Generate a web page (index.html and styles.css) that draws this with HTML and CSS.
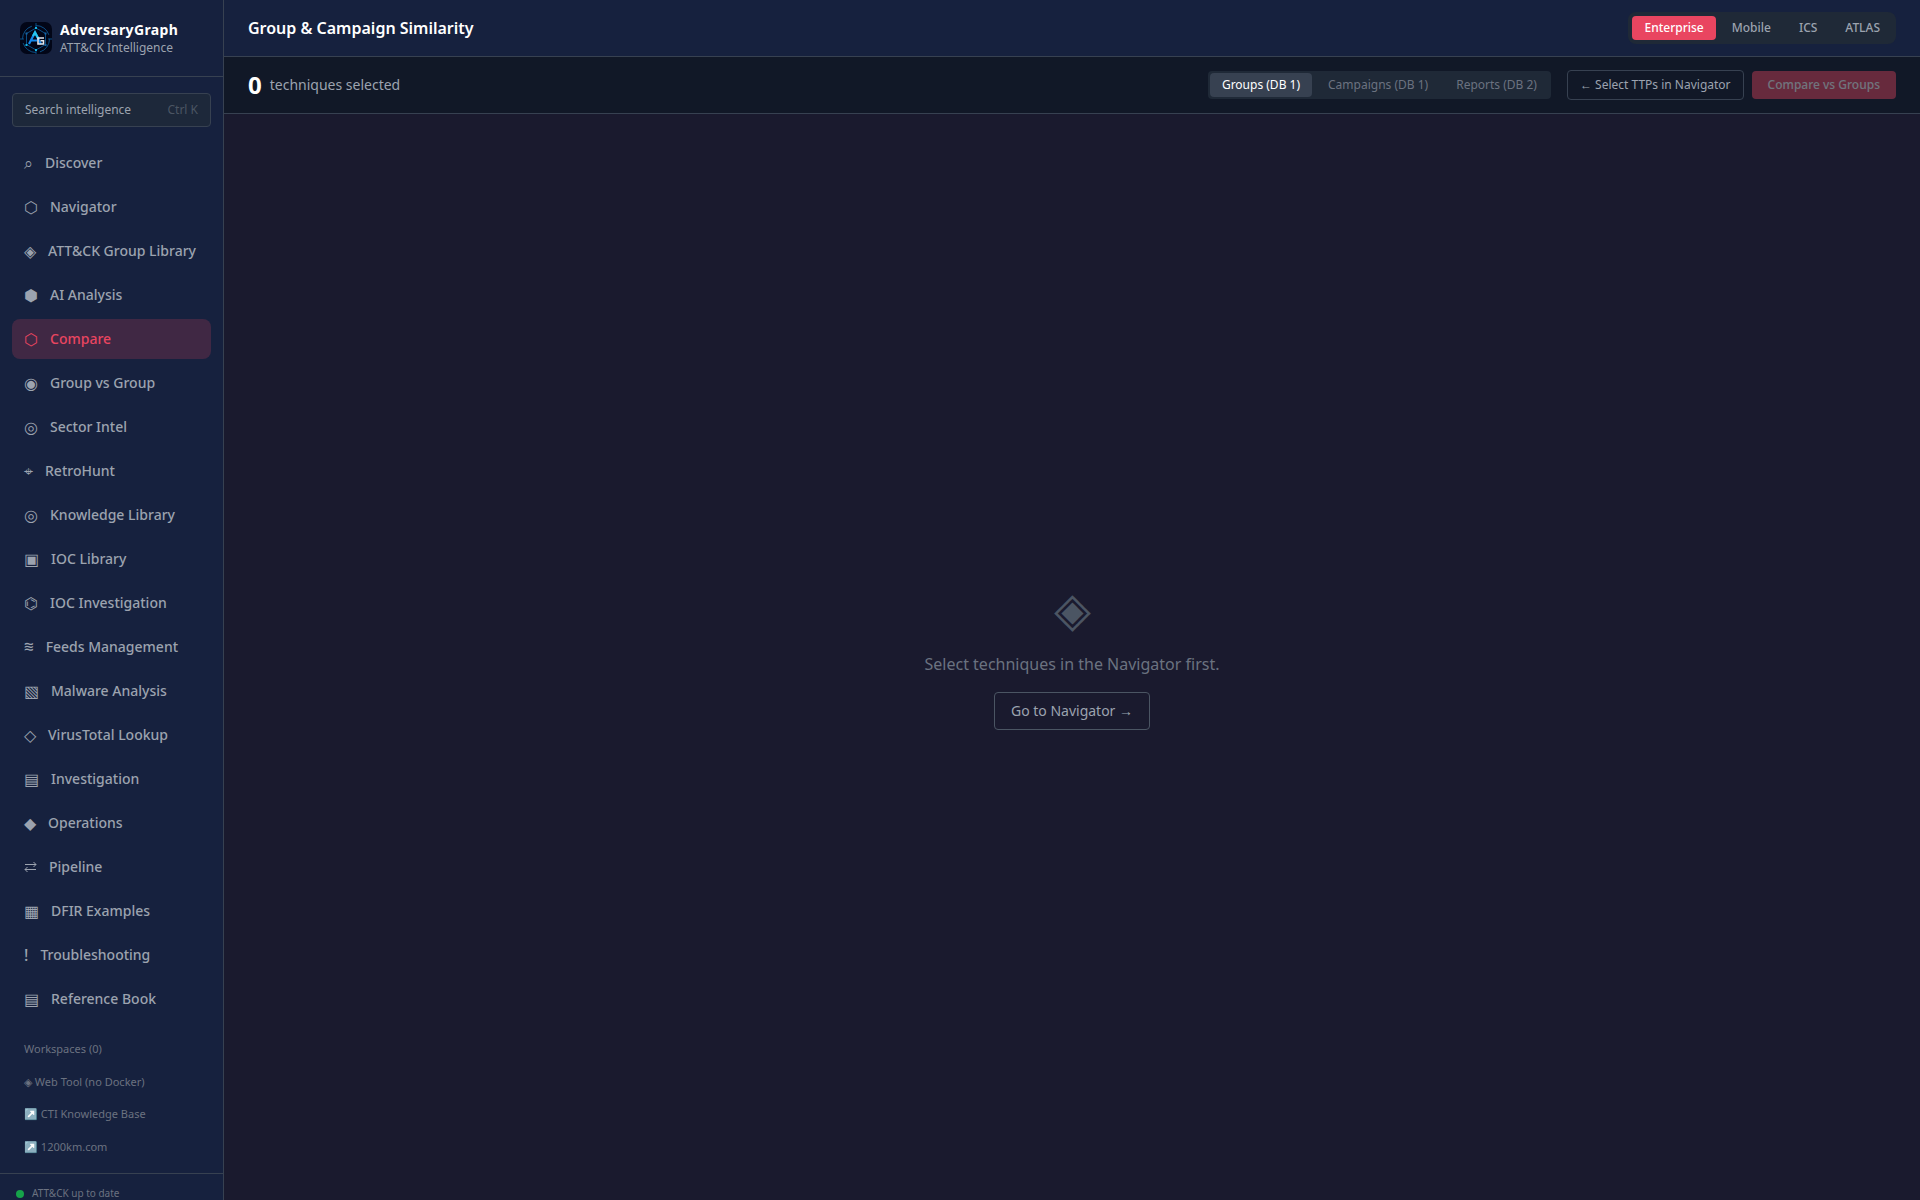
FILE: index.html
```
<!DOCTYPE html>
<html lang="en">
<head>
  <meta charset="UTF-8">
  <meta name="viewport" content="width=device-width, initial-scale=1.0">
  <title>AdversaryGraph</title>
  <link rel="stylesheet" href="styles.css">
</head>
<body>
  <div class="app">
    <aside class="sidebar">
      <div class="brand">
        <svg class="brand-logo" viewBox="0 0 32 32" aria-hidden="true">
          <rect width="32" height="32" rx="7" fill="#020617"/>
          <g fill="none" stroke="#0b4f86" stroke-width="1">
            <circle cx="16" cy="17" r="13.5" stroke-dasharray="17 4"/>
            <path d="M16 6l9.500 5.500v11L16 28l-9.500-5.500v-11z"/>
            <path d="M16 1v5M16 28v4M0 17h4M28 17h4"/>
          </g>
          <path d="M9 22l6-11.500L21 22M11 18.500h6" fill="none" stroke="#1286ea" stroke-width="2.200"/>
          <path d="M13 14l2-3.500 3 5.500" fill="none" stroke="#25c5ee" stroke-width="2.200"/>
          <path d="M24 16h-6v6h5.500v-3.200H20.500" fill="none" stroke="#e2e8f0" stroke-width="1.600"/>
          <g fill="#13b7e6">
            <rect x="15" y="5" width="2" height="2"/>
            <rect x="15" y="27" width="2" height="2"/>
            <rect x="5.500" y="22" width="2" height="2"/>
          </g>
          <g fill="#1766a6">
            <rect x="5.500" y="10.500" width="2" height="2"/>
            <rect x="24.500" y="10.500" width="2" height="2"/>
            <rect x="24.500" y="22" width="2" height="2"/>
          </g>
        </svg>
        <div>
          <div class="brand-name">AdversaryGraph</div>
          <div class="brand-sub">ATT&amp;CK Intelligence</div>
        </div>
      </div>

      <button class="search" type="button"><span>Search intelligence</span><kbd>Ctrl K</kbd></button>

      <nav class="nav">
        <a href="#"><span class="icon">⌕</span>Discover</a>
        <a href="#"><span class="icon">⬡</span>Navigator</a>
        <a href="#"><span class="icon">◈</span>ATT&amp;CK Group Library</a>
        <a href="#"><span class="icon">⬢</span>AI Analysis</a>
        <a href="#" class="active" aria-current="page"><span class="icon">⬡</span>Compare</a>
        <a href="#"><span class="icon">◉</span>Group vs Group</a>
        <a href="#"><span class="icon">◎</span>Sector Intel</a>
        <a href="#"><span class="icon">⌖</span>RetroHunt</a>
        <a href="#"><span class="icon">◎</span>Knowledge Library</a>
        <a href="#"><span class="icon">▣</span>IOC Library</a>
        <a href="#"><span class="icon">⌬</span>IOC Investigation</a>
        <a href="#"><span class="icon icon-mono">≋</span>Feeds Management</a>
        <a href="#"><span class="icon">▧</span>Malware Analysis</a>
        <a href="#"><span class="icon">◇</span>VirusTotal Lookup</a>
        <a href="#"><span class="icon">▤</span>Investigation</a>
        <a href="#"><span class="icon">◆</span>Operations</a>
        <a href="#"><svg class="icon-swap" viewBox="0 0 13 12" aria-hidden="true"><path d="M1 3.500h11M9.500 1L12 3.500 9.500 6M12 8.500H1M3.500 6L1 8.500 3.500 11"/></svg>Pipeline</a>
        <a href="#"><span class="icon">▦</span>DFIR Examples</a>
        <a href="#"><span class="icon">!</span>Troubleshooting</a>
        <a href="#"><span class="icon">▤</span>Reference Book</a>
      </nav>

      <div class="links">
        <button type="button">Workspaces (0)</button>
        <a href="#">◈ Web Tool (no Docker)</a>
        <a href="#">↗️ CTI Knowledge Base</a>
        <a href="#">↗️ 1200km.com</a>
      </div>

      <div class="status"><span class="dot"></span>ATT&amp;CK up to date</div>
    </aside>

    <div class="content">
      <header class="topbar">
        <h1>Group &amp; Campaign Similarity</h1>
        <div class="domains">
          <button type="button" class="active">Enterprise</button>
          <button type="button">Mobile</button>
          <button type="button">ICS</button>
          <button type="button">ATLAS</button>
        </div>
      </header>

      <div class="toolbar">
        <div class="count"><strong>0</strong><span>techniques selected</span></div>
        <div class="tabs">
          <button type="button" class="active">Groups (DB 1)</button>
          <button type="button">Campaigns (DB 1)</button>
          <button type="button">Reports (DB 2)</button>
        </div>
        <div class="actions">
          <button type="button" class="btn-outline">← Select TTPs in Navigator</button>
          <button type="button" class="btn-primary" disabled>Compare vs Groups</button>
        </div>
      </div>

      <main class="empty">
        <div class="empty-icon">◈</div>
        <p>Select techniques in the Navigator first.</p>
        <button type="button" class="btn-go">Go to Navigator →</button>
      </main>
    </div>
  </div>
</body>
</html>
```

FILE: styles.css
```
* {
  box-sizing: border-box;
}
body {
  font-family: system-ui, "Noto Sans", sans-serif;
  font-size: 16px;
  line-height: 24px;
  margin: 0;
  background-color: #1a1a2e;
  color: #f3f4f6;
}
button {
  font: inherit;
  border: none;
  background: none;
  cursor: pointer;
}
a {
  color: inherit;
  text-decoration: none;
}
h1, p {
  margin: 0;
}
.app {
  display: flex;
  height: 100vh;
  overflow: hidden;
}

/* Sidebar */
.sidebar {
  width: 224px;
  flex-shrink: 0;
  display: flex;
  flex-direction: column;
  overflow: hidden;
  background: #16213e;
  border-right: 1px solid #374151;
}
.sidebar > * {
  flex-shrink: 0;
}
.brand {
  display: flex;
  align-items: center;
  gap: 8px;
  padding: 20px;
  border-bottom: 1px solid #374151;
}
.brand-logo {
  width: 32px;
  height: 32px;
}
.brand-name {
  font-size: 14px;
  line-height: 20px;
  font-weight: 700;
  letter-spacing: 0.025em;
  color: #fff;
}
.brand-sub {
  font-size: 12px;
  line-height: 16px;
  color: #9ca3af;
}
.search {
  display: flex;
  justify-content: space-between;
  align-items: center;
  margin: 16px 12px 0;
  padding: 8px 12px;
  font-size: 12px;
  line-height: 16px;
  color: #9ca3af;
  background: #1d283a;
  border: 1px solid #374151;
  border-radius: 4px;
}
.search kbd {
  font-family: inherit;
  color: #4b5563;
}
.nav {
  display: flex;
  flex-direction: column;
  gap: 4px;
  padding: 16px 12px 14px;
}
.nav a {
  display: flex;
  align-items: center;
  gap: 12px;
  padding: 8px 12px;
  font-size: 14px;
  font-weight: 500;
  color: #9ca3af;
  border-radius: 8px;
}
.nav a:hover {
  color: #fff;
}
.nav a.active {
  background: rgba(233, 69, 96, 0.2);
  color: #e94560;
}
.nav .icon {
  font-size: 16px;
}
.nav .icon-mono {
  font-family: "DejaVu Sans Mono", monospace;
}
.icon-swap {
  width: 13px;
  height: 12px;
  fill: none;
  stroke: currentColor;
}
.links {
  display: flex;
  flex-direction: column;
  padding: 0 12px 10px;
  font-size: 11px;
  line-height: 1.5;
  color: #6b7280;
}
.links button,
.links a {
  padding: 8px 12px;
  text-align: left;
  color: inherit;
}
.status {
  display: flex;
  align-items: center;
  gap: 8px;
  padding: 12px 16px;
  border-top: 1px solid #374151;
  font-size: 10px;
  line-height: 15px;
  color: #6b7280;
}
.dot {
  width: 8px;
  height: 8px;
  border-radius: 50%;
  background: #16a34a;
}

/* Content */
.content {
  flex: 1;
  min-width: 0;
  display: flex;
  flex-direction: column;
}
.topbar {
  display: flex;
  align-items: center;
  justify-content: space-between;
  padding: 12px 24px;
  background: #16213e;
  border-bottom: 1px solid #374151;
}
.topbar h1 {
  font-size: 16px;
  font-weight: 600;
  color: #fff;
}
.domains,
.tabs {
  display: flex;
  gap: 4px;
  background: #1f2937;
}
.domains {
  padding: 4px;
  border-radius: 8px;
}
.tabs {
  margin-left: auto;
  padding: 2px;
  border-radius: 4px;
}
.domains button,
.tabs button {
  padding: 4px 12px;
  font-size: 12px;
  line-height: 16px;
  border-radius: 4px;
}
.domains button {
  font-weight: 500;
  color: #9ca3af;
}
.domains .active {
  background: #e94560;
  color: #fff;
}
.tabs button {
  color: #6b7280;
}
.tabs .active {
  background: #374151;
  color: #fff;
}
.toolbar {
  display: flex;
  align-items: center;
  gap: 16px;
  padding: 12px 24px;
  background: #111827;
  border-bottom: 1px solid #374151;
}
.count {
  display: flex;
  align-items: center;
  gap: 8px;
  font-size: 14px;
  color: #9ca3af;
}
.count strong {
  font-size: 24px;
  line-height: 32px;
  color: #fff;
}
.actions {
  display: flex;
  align-items: center;
  gap: 8px;
  font-size: 12px;
  line-height: 16px;
}
.btn-outline {
  padding: 6px 12px;
  color: #9ca3af;
  border: 1px solid #374151;
  border-radius: 4px;
}
.btn-primary {
  padding: 6px 16px;
  font-weight: 500;
  color: #fff;
  background: #e94560;
  border-radius: 4px;
}
.btn-primary:disabled {
  opacity: 0.4;
  cursor: not-allowed;
}
.empty {
  flex: 1;
  display: flex;
  flex-direction: column;
  align-items: center;
  justify-content: center;
  gap: 16px;
  color: #6b7280;
}
.empty-icon {
  margin-bottom: 4px;
  font-size: 48px;
  line-height: 48px;
  color: #4b5563;
}
.btn-go {
  padding: 8px 16px;
  font-size: 14px;
  line-height: 20px;
  color: #9ca3af;
  border: 1px solid #4b5563;
  border-radius: 4px;
}
```
